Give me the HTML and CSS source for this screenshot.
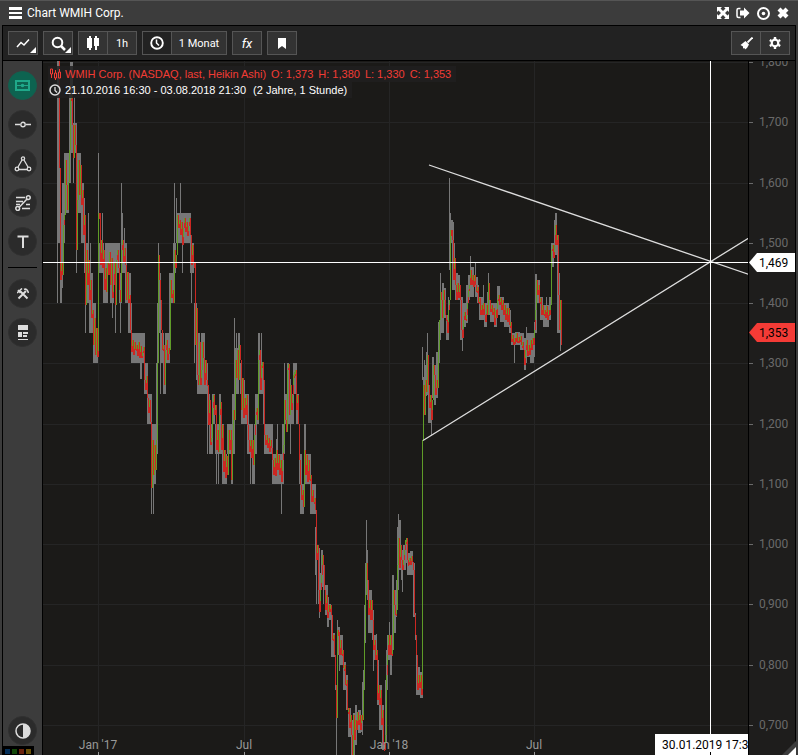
FILE: index.html
```html
<!DOCTYPE html>
<html lang="de">
<head>
    <meta charset="UTF-8">
    <meta name="viewport" content="width=device-width, initial-scale=1.0">
    <title>Chart WMIH Corp.</title>

    <link rel="stylesheet" href="styles.css">

</head>
<body>

    <div class="window">

        <header class="titlebar">
            <button class="plain" aria-label="Menü">
                <svg width="13" height="12" shape-rendering="crispEdges"><path d="M0 0H13V3H0zM0 5H13V7H0zM0 9H13V12H0z" fill="#fff"/></svg>
            </button>
            <h1>Chart WMIH Corp.</h1>

            <div class="win-buttons">
                <button class="plain" aria-label="Maximieren">
                    <svg width="12" height="12"><path d="M0 0H5L3.500 1.500L6 4L8.500 1.500L7 0H12V5L10.500 3.500L8 6L10.500 8.500L12 7V12H7L8.500 10.500L6 8L3.500 10.500L5 12H0V7L1.500 8.500L4 6L1.500 3.500L0 5z" fill="#fff"/></svg>
                </button>
                <button class="plain" aria-label="Abdocken">
                    <svg width="14" height="12"><path d="M4.500 1.500H2.500Q1 1.500 1 3V9Q1 10.500 2.500 10.500H4.500" fill="none" stroke="#fff" stroke-width="1.500"/><path d="M4 3.500H8V.5L13.500 6L8 11.500V8.500H4z" fill="#fff"/></svg>
                </button>
                <button class="plain" aria-label="Fixieren">
                    <svg width="13" height="13"><circle cx="6.500" cy="6.500" r="5.500" fill="none" stroke="#fff" stroke-width="2"/><circle cx="6.500" cy="6.500" r="1.800" fill="#fff"/></svg>
                </button>
                <button class="plain" aria-label="Schließen">
                    <svg width="12" height="12"><path d="M2 2L10 10M10 2L2 10" stroke="#fff" stroke-width="4.200"/></svg>
                </button>
            </div>
        </header>

        <div class="content">

            <div class="toolbar">
                <div class="group">
                    <button class="more" aria-label="Zeichnen">
                        <svg width="14" height="10"><path d="M1 9L5 4.500L8 7L13 1.500" fill="none" stroke="#fff" stroke-width="1.500"/></svg>
                    </button>
                </div>
                <div class="group">
                    <button class="more" aria-label="Zoom">
                        <svg width="15" height="15"><circle cx="6.500" cy="6.500" r="4.800" fill="none" stroke="#fff" stroke-width="2"/><path d="M10 10L14 14" stroke="#fff" stroke-width="2.500"/></svg>
                    </button>
                </div>
                <div class="group">
                    <button aria-label="Charttyp">
                        <svg width="12" height="16" shape-rendering="crispEdges"><path d="M0 3H5V13H0zM2 1H4V15H2zM7 3H12V11H7zM8 1H10V15H8z" fill="#fff"/></svg>
                    </button>
                    <button>1h</button>
                </div>
                <div class="group">
                    <button class="pressed" aria-label="Zeitraum">
                        <svg width="14" height="14"><circle cx="7" cy="7" r="5.800" fill="none" stroke="#fff" stroke-width="1.900"/><path d="M6.500 3.500V7L9 9.500" fill="none" stroke="#fff" stroke-width="1.500"/></svg>
                    </button>
                    <button class="period">1 Monat</button>
                </div>
                <div class="group">
                    <button class="fx">fx</button>
                </div>
                <div class="group">
                    <button aria-label="Lesezeichen">
                        <svg width="8" height="11"><path d="M0 0H8V11L4 8L0 11z" fill="#fff"/></svg>
                    </button>
                </div>

                <div class="group last">
                    <button aria-label="Löschen">
                        <svg width="13" height="13"><path d="M12.500 .5L7.500 5.500" stroke="#fff" stroke-width="1.800"/><path d="M5.500 4L9 7.500L7 11L5 12.500L4.500 11L3 11.500L3 9.500L.5 8z" fill="#fff"/></svg>
                    </button>
                    <button aria-label="Einstellungen">
                        <svg width="12" height="12"><circle cx="6" cy="6" r="3.300" fill="none" stroke="#fff" stroke-width="2.200"/><path d="M6 0V2M6 10V12M.8 3L2.500 4M9.500 8L11.200 9M.8 9L2.500 8M9.500 4L11.200 3" stroke="#fff" stroke-width="2.400"/></svg>
                    </button>
                </div>
            </div>

            <div class="main">

                <nav class="sidebar">
                    <button class="active" aria-label="Handel">
                        <svg width="15" height="11"><path d="M1 1H14V10H1z" fill="none" stroke="#1fa98a" stroke-width="2"/><path d="M1 5.500H14" stroke="#1fa98a"/><circle cx="7.500" cy="5.500" r="1.800" fill="#1fa98a"/></svg>
                    </button>
                    <button aria-label="Linie">
                        <svg width="16" height="7"><path d="M0 3.500H5M11 3.500H16" stroke="#ddd" stroke-width="1.500"/><circle cx="8" cy="3.500" r="2.200" fill="none" stroke="#ddd" stroke-width="1.400"/></svg>
                    </button>
                    <button aria-label="Formen">
                        <svg width="18" height="16" fill="none" stroke="#ddd" stroke-width="1.300"><path d="M8 4L4 11M10 4L14 11M5 13.500H13"/><circle cx="9" cy="2.500" r="1.600"/><circle cx="3" cy="13" r="1.800"/><circle cx="15" cy="13" r="1.800"/></svg>
                    </button>
                    <button aria-label="Fibonacci">
                        <svg width="16" height="16" fill="none" stroke="#ddd" stroke-width="1.500"><path d="M1 2.500H10M1 6.500H8M11 9.500H15M1 9.500H5M7 13.500H15M4 12.500L12 4"/><circle cx="13.300" cy="2.700" r="1.900"/><circle cx="2.700" cy="13.500" r="1.900"/></svg>
                    </button>
                    <button aria-label="Text">
                        <svg width="12" height="13"><path d="M.5 1.500H11.500M6 1V13" stroke="#ddd" stroke-width="2"/></svg>
                    </button>
                    <hr>
                    <button aria-label="Werkzeuge">
                        <svg width="12" height="12"><path d="M1.500 10.500L9 3M10.500 10.500L3 3" stroke="#ddd" stroke-width="2"/><path d="M0 5L5 .5M7 1.500Q10 0 11.500 5M1 2L3.500 5" fill="none" stroke="#ddd" stroke-width="1.600"/></svg>
                    </button>
                    <button aria-label="Vorlagen">
                        <svg width="10" height="15" shape-rendering="crispEdges"><path d="M0 0H10V5H0zM0 7H4V12H0zM5 7H10V9H5zM5 10H9V12H5zM0 14H10V15H0z" fill="#ddd"/></svg>
                    </button>
                    <button class="contrast" aria-label="Kontrast">
                        <svg width="16" height="16"><circle cx="8" cy="8" r="7" fill="none" stroke="#ddd" stroke-width="1.500"/><path d="M8 1A7 7 0 0 1 8 15z" fill="#ddd"/></svg>
                    </button>
                    <div class="leds"><i class="blue"></i><i class="green"></i><i class="red"></i><i class="yellow"></i></div>
                </nav>

                <div class="plot">
                    <svg class="canvas" role="img" aria-label="Kursverlauf WMIH Corp.">
                        <g transform="translate(-43 -61)">
                            <g id="grid"></g>
                            <g id="ranges" fill="#777"></g>
                            <g id="bodies"></g>
                            <g class="trend">
                                <path d="M429 165L768 281M423 440.500L768 226"/>
                            </g>
                            <g class="time">
                                <text x="98" y="749">Jan '17</text>
                                <text x="244" y="749">Jul</text>
                                <text x="389" y="749">Jan '18</text>
                                <text x="534" y="749">Jul</text>
                            </g>
                            <path class="cross" d="M43 262.500H2000M710.500 61V2000"/>
                            <rect x="655" y="734" width="110" height="30" fill="#fff"/>
                            <path d="M710.500 752V760" stroke="#000"/>
                            <text class="date" x="662" y="749">30.01.2019 17:30</text>
                        </g>
                    </svg>

                    <div class="legend">
                        <p class="quote">
                            <svg width="12" height="12" fill="none" stroke="#f23c35"><path d="M1.500 1H3.500V6H1.500zM2.500 6V10M5.500 5H7.500V10H5.500zM6.500 2V5M6.500 10V12M9.500 4H11.500V10H9.500zM10.500 1V4"/></svg>
                            <span>WMIH Corp. (NASDAQ, last, Heikin Ashi)</span>
                            <span>O: 1,373</span><span>H: 1,380</span><span>L: 1,330</span><span>C: 1,353</span>
                        </p>
                        <p>
                            <svg width="12" height="12"><circle cx="6" cy="6" r="5" fill="none" stroke="#ddd" stroke-width="1.500"/><path d="M6 3V6.500L8 8.500" fill="none" stroke="#ddd" stroke-width="1.300"/></svg>
                            <span>21.10.2016 16:30 - 03.08.2018 21:30</span>
                            <span class="span">(2 Jahre, 1 Stunde)</span>
                        </p>
                    </div>
                </div>

                <svg class="axis" role="img" aria-label="Preisachse">
                    <g transform="translate(0 -61)">
                        <g id="prices"></g>
                        <path d="M0 262.500L8 253H47V272H8z" fill="#fff"/>
                        <text class="tag" x="10" y="267">1,469</text>
                        <path d="M0 332.500L8 323H47V342H8z" fill="#f43b36"/>
                        <text class="tag" x="10" y="337">1,353</text>
                    </g>
                </svg>

            </div>
        </div>

        <svg class="resize" width="16" height="16"><path d="M16 0V16H0z" fill="#3c3c3c"/><path d="M14 8V16H6z" fill="#fff"/></svg>

    </div>

    <script src="chart.js"></script>

</body>
</html>
```

FILE: styles.css
```css
*
{
    margin: 0;
    padding: 0;
    box-sizing: border-box;
}

body
{
    background: #3c3c3c;
    color: #fff;
    font-family: Roboto, "Liberation Sans", sans-serif;
    font-size: 12px;
}

button
{
    color: inherit;
    font: inherit;
    font-size: 11px;
    border: none;
    background: none;
    display: flex;
    align-items: center;
    justify-content: center;
}

.window
{
    display: flex;
    flex-direction: column;
    height: 100vh;
    overflow: hidden;
    position: relative;
    padding: 0 2px;
    border-top: 1px solid #555;
}

.titlebar
{
    display: flex;
    align-items: center;
    gap: 5px;
    height: 24px;
    padding: 0 7px;
}

.titlebar h1
{
    font-size: 12px;
    font-weight: normal;
}

.win-buttons
{
    display: flex;
    align-items: center;
    gap: 7px;
    margin-left: auto;
}

.content
{
    display: flex;
    flex-direction: column;
    flex: 1;
    min-height: 0;
    border: 1px solid #000;
    border-bottom: none;
}

/* toolbar */

.toolbar
{
    display: flex;
    align-items: center;
    gap: 5px;
    height: 35px;
    padding: 0 5px;
    background: #222;
    border-bottom: 1px solid #000;
}

.group
{
    display: flex;
    height: 24px;
    border: 1px solid #555;
    background: #333;
}

.group button
{
    width: 28px;
    position: relative;
}

.group button + button
{
    width: 29px;
    border-left: 1px solid #555;
}

.group .period
{
    width: 55px !important;
}

.group .pressed
{
    background: #222;
}

.group .fx
{
    font-size: 13px;
    font-style: italic;
}

.group .more::after
{
    content: '';
    position: absolute;
    right: 1px;
    bottom: 1px;
    border: 3px solid #fff;
    border-top-color: transparent;
    border-left-color: transparent;
}

.last
{
    margin-left: auto;
}

.main
{
    display: flex;
    flex: 1;
    min-height: 0;
}

/* drawing tools on the left */

.sidebar
{
    display: flex;
    flex-direction: column;
    align-items: center;
    gap: 10px;
    width: 40px;
    padding-top: 10px;
    background: #3c3c3c;
    border-right: 1px solid #000;
}

.sidebar button
{
    width: 29px;
    height: 29px;
    flex: none;
    border-radius: 50%;
    background: #2b2b2b;
    border: 1px solid #303030;
}

.sidebar .active
{
    background: #0d6350;
    border-color: #13604f;
}

.sidebar hr
{
    width: 29px;
    border: none;
    border-top: 1px solid #000;
    margin: 1px 0;
}

.sidebar .contrast
{
    margin-top: auto;
}

.leds
{
    display: flex;
    align-self: flex-start;
    gap: 2px;
    width: 31px;
    height: 9px;
    margin-top: -9px;
    padding: 3px 2px;
    background: #000;
}

.leds i
{
    width: 5px;
    height: 5px;
}

.blue { background: #05305a; }
.green { background: #124708; }
.red { background: #6b220c; }
.yellow { background: #6b5209; }

/* chart */

.plot
{
    flex: 1;
    min-width: 0;
    position: relative;
    background: #1b1a18;
}

.canvas
{
    display: block;
    width: 100%;
    height: 100%;
}

.axis
{
    width: 47px;
    height: 100%;
    background: #1e1d1c;
    border-left: 1px solid #000;
    overflow: hidden;
}

#grid
{
    stroke: #252525;
}

.trend
{
    fill: none;
    stroke: #ddd;
    stroke-width: 1.3;
}

.cross
{
    stroke: #fff;
}

.time
{
    fill: #999;
    text-anchor: middle;
}

#prices text
{
    fill: #6a6a6a;
}

.legend
{
    position: absolute;
    left: 5px;
    top: 5px;
    font-family: "Liberation Sans", sans-serif;
    font-size: 11px;
}

.legend p
{
    display: flex;
    align-items: center;
    gap: 5px;
    width: max-content;
    height: 16px;
    padding-left: 1px;
    padding-right: 5px;
    background: rgba(32, 32, 32, 0.85);
}

.legend svg + span
{
    margin-left: -1px;
}

.legend .quote
{
    color: #f23c35;
}

.legend .span
{
    margin-left: 2px;
}

.resize
{
    position: absolute;
    right: 0;
    bottom: 0;
}
```

FILE: chart.js
```js
var NS = 'http://www.w3.org/2000/svg';

// high/low ranges: x width top bottom
var ranges = `
57 1 60 303,58 2 60 243,60 3 213 288,60 2 213 303,62 3 183 243,64 4 153 213,68 1 177 213,68 2 153 183,69 2 93 183,
70 3 62 153,72 4 123 153,73 1 123 183,74 1 97 123,76 1 123 273,77 4 153 213,81 3 183 243,84 1 198 273,85 3 243 273,
85 1 243 333,86 3 243 303,88 1 213 303,89 3 273 303,90 1 243 273,89 4 273 333,92 4 303 333,93 5 333 363,98 1 153 213,
99 5 243 273,102 1 213 243,103 5 273 303,105 7 243 273,110 4 273 303,113 2 243 273,112 1 243 318,115 1 243 333,
116 4 243 273,119 3 273 303,120 1 273 333,121 1 183 273,122 1 213 243,124 1 228 243,122 5 243 273,125 4 273 303,
129 2 273 333,128 4 303 333,131 14 333 363,140 2 363 379,144 4 363 394,147 5 394 424,151 5 424 484,151 1 484 514,
153 1 484 514,156 2 363 454,157 1 303 394,158 1 243 303,158 3 273 333,160 4 333 363,160 1 333 394,163 3 363 394,
162 2 333 363,165 5 333 363,169 6 273 303,169 1 303 333,173 3 243 273,174 1 183 243,176 1 198 213,176 15 213 243,
180 1 183 213,182 1 243 273,190 4 243 273,191 1 273 303,194 3 303 333,194 1 333 363,196 1 333 380,198 2 333 363,
197 5 363 394,201 4 333 363,202 6 363 394,207 3 394 424,207 1 424 454,209 4 424 454,212 3 394 424,215 7 424 454,
216 1 454 484,218 1 454 484,219 2 394 424,222 2 424 454,222 5 454 484,227 5 424 454,231 2 454 484,232 3 394 454,
234 1 318 424,235 4 348 394,236 1 333 348,238 2 333 363,240 2 363 394,241 3 394 424,244 1 380 424,243 6 394 424,
247 6 424 454,250 1 454 484,252 3 454 484,254 3 424 454,255 4 394 424,258 2 333 394,261 1 333 363,259 4 363 394,
263 2 380 424,264 9 424 454,272 12 454 484,277 1 424 454,276 1 439 454,281 1 484 514,282 3 424 454,284 1 363 454,
284 4 394 424,287 2 363 424,290 1 379 454,289 5 394 424,293 4 363 394,296 3 394 424,299 3 454 484,300 4 484 514,
304 2 424 484,306 5 454 484,310 6 484 514,315 2 527 575,316 1 575 604,318 2 548 604,319 1 604 618,320 1 573 600,
321 2 550 587,323 1 556 604,325 3 585 615,327 2 597 627,329 2 604 620,331 1 610 657,332 3 633 657,335 1 655 690,
336 1 690 755,337 1 620 670,338 2 627 655,339 1 655 671,340 3 635 665,343 3 662 690,346 2 675 710,348 3 708 737,
351 2 720 755,353 2 713 755,355 2 705 745,358 3 710 733,360 2 715 732,362 1 682 735,363 1 670 690,364 1 605 690,
365 1 563 643,366 1 520 595,367 1 550 600,368 4 590 633,371 1 593 625,372 2 610 640,373 1 632 671,374 3 635 660,
376 1 634 660,377 2 660 705,379 3 685 730,382 2 705 750,385 2 680 743,386 2 650 690,387 3 635 660,389 1 622 655,
390 2 640 675,392 2 575 650,394 2 590 633,396 1 580 617,397 1 527 590,398 1 514 590,399 2 520 570,401 2 550 580,
402 1 580 592,403 3 545 570,406 1 538 563,407 3 553 575,410 3 551 575,413 2 563 617,415 1 613 640,416 1 645 695,
417 3 667 695,420 3 672 698,422 1 347 380,423 1 377 420,424 2 365 400,424 1 360 400,426 1 352 396,427 1 333 395,
428 2 385 423,430 2 397 423,431 1 395 436,432 2 357 398,434 2 365 405,436 2 352 398,438 2 322 363,440 1 273 340,
441 1 295 333,442 2 283 333,444 2 288 318,446 2 315 340,448 1 297 340,449 1 178 270,450 1 213 255,451 2 220 243,
452 2 222 290,454 1 243 290,455 3 273 300,458 2 275 300,460 3 297 340,462 1 340 351,463 3 303 327,466 2 285 323,
468 2 275 300,470 1 256 280,470 4 267 297,475 1 262 297,475 3 277 297,477 2 285 303,479 5 297 320,483 1 285 300,
484 3 303 327,488 1 273 310,487 3 292 315,490 4 303 322,494 3 303 327,497 3 286 315,500 4 297 322,504 5 303 327,
509 2 310 333,511 3 333 345,514 1 333 363,515 5 332 345,520 4 333 350,524 2 338 370,526 4 333 357,526 1 327 363,
530 4 333 363,534 1 322 357,535 2 274 333,537 3 280 303,540 3 297 320,543 6 305 327,546 1 297 310,549 2 297 320,
551 3 243 267,554 1 220 255,555 2 213 255,557 1 237 333,558 2 273 333,560 1 300 351,561 1 310 345`;

// heikin ashi course: x y
var course = `
58 60,59 168,60 280,61 262,62 275,63 225,64 215,65 160,66 185,67 210,68 182,69 150,70 100,71 95,72 125,73 158,74 125,
75 145,76 250,77 200,78 160,79 195,80 165,81 205,82 190,83 235,84 215,85 305,86 250,87 285,88 260,89 300,90 280,
91 318,92 310,93 345,94 318,95 355,96 328,97 357,98 345,98 213,99 213,100 265,101 240,102 268,103 250,104 290,105 268,
106 292,107 262,108 275,109 252,110 285,111 258,112 298,113 285,114 262,115 305,116 260,117 250,118 268,119 290,120 302,
121 250,122 240,123 263,124 248,125 265,126 300,127 272,128 303,129 295,130 330,131 352,132 340,133 355,134 342,
135 350,136 345,137 356,138 342,139 358,140 346,141 358,142 352,143 347,144 380,145 390,146 376,147 398,148 413,
149 400,150 422,151 488,152 440,153 475,154 445,155 470,156 440,157 363,158 255,159 280,160 300,161 330,162 350,
163 345,164 385,165 350,166 340,167 360,168 348,169 350,170 280,171 298,172 290,173 303,174 250,175 268,176 255,
177 215,178 228,179 220,180 235,181 222,182 245,183 228,184 218,185 232,186 222,187 236,188 226,189 218,190 235,
191 265,192 245,193 262,194 262,195 345,196 308,197 375,198 385,199 342,200 385,201 370,202 342,203 358,204 385,
205 360,206 380,207 385,208 425,209 400,210 445,211 438,212 408,213 395,214 415,215 405,216 450,217 430,218 452,
219 415,220 402,221 450,222 425,223 472,224 450,225 478,226 456,227 475,228 430,229 450,230 430,231 480,232 440,
233 410,234 420,235 360,236 378,237 350,238 380,239 345,240 360,241 410,242 378,243 418,244 398,245 415,246 395,
247 425,248 440,249 452,250 440,251 458,252 440,253 465,254 435,255 415,256 408,257 420,258 360,259 350,260 390,
261 365,262 362,263 380,264 435,265 445,266 435,267 448,268 438,269 452,270 440,271 448,272 460,273 475,274 458,
275 476,276 450,277 470,278 455,279 475,280 460,281 482,282 460,283 445,284 400,285 420,286 432,287 370,288 364,
289 415,290 385,291 410,292 395,293 375,294 372,295 370,296 410,297 395,298 424,299 460,300 485,301 500,302 490,
303 507,304 450,305 475,306 455,307 482,308 460,309 480,310 475,311 502,312 490,313 502,314 498,315 510,316 560,
317 545,318 590,319 612,320 590,321 575,322 555,323 565,324 590,325 610,326 595,327 618,328 605,329 612,330 605,
331 615,332 640,333 635,334 655,335 685,336 718,337 670,337 630,338 632,339 655,340 640,341 655,342 650,343 668,
344 665,345 685,346 680,347 710,348 708,349 728,350 715,351 735,352 755,353 715,354 740,355 720,356 730,357 712,
358 725,359 715,360 730,361 715,362 720,363 690,364 640,365 595,366 563,367 580,368 615,369 600,370 620,371 600,
372 620,373 650,374 640,375 660,376 650,377 700,378 685,379 705,380 690,381 725,382 710,383 745,384 750,385 735,
386 675,387 655,388 635,389 655,390 635,391 655,392 650,393 590,394 605,395 615,396 610,397 565,398 538,399 568,
400 545,401 560,402 570,403 560,404 550,405 540,406 538,407 560,408 565,409 558,410 565,411 556,412 562,413 570,
414 615,415 635,416 655,417 690,418 675,419 688,420 675,421 695,422 683,422 440,423 385,424 415,425 380,426 392,
427 355,428 385,429 408,430 395,431 420,432 400,433 365,434 375,435 395,436 380,437 388,438 350,439 320,440 292,
441 300,442 318,443 290,444 300,445 315,446 320,447 333,448 310,449 300,450 230,451 230,452 240,453 280,454 258,
455 285,456 300,457 283,458 298,459 285,460 300,461 330,462 338,463 320,464 312,465 320,466 315,467 303,468 290,
469 285,470 270,471 285,472 275,473 287,474 275,475 285,476 292,477 287,478 303,479 298,480 315,481 305,482 315,
483 303,484 315,485 322,486 305,487 315,488 283,489 300,490 312,491 305,492 315,493 308,494 325,495 310,496 318,
497 300,498 295,499 305,500 298,501 310,502 300,503 315,504 305,505 320,506 308,507 322,508 308,509 325,510 322,
511 342,512 335,513 345,514 338,515 342,516 333,517 343,518 337,519 342,520 336,521 345,522 342,523 350,524 365,
525 350,526 340,527 356,528 345,529 355,530 340,531 350,532 338,533 345,534 330,535 310,536 280,537 295,538 285,
539 303,540 298,541 315,542 305,543 315,544 310,545 318,546 306,547 320,548 310,549 315,550 305,551 250,552 245,
553 258,554 245,555 225,556 245,557 235,558 295,559 330,560 300,561 345`;

var RED = '#cc2722';
var GREEN = '#5f9c28';

var grid = document.getElementById('grid');
var prices = document.getElementById('prices');
var bodies = document.getElementById('bodies');

function make(parent, name, attrs, text)
{
    var el = document.createElementNS(NS, name);
    for (var key in attrs)
    {
        el.setAttribute(key, attrs[key]);
    }
    if (text) el.textContent = text;
    parent.appendChild(el);
}

function rows(data)
{
    return data.trim().split(',').map(row => row.trim().split(' ').map(Number));
}

function body(x, y, height, fill)
{
    make(bodies, 'rect', { x: x, y: y, width: 1, height: height, fill: fill });
}

function drawBody(x, from, to)
{
    var y = Math.min(from, to);
    var height = Math.max(Math.abs(to - from), 6);

    // only a real rise is a green body, a small one just gets a green tip
    if (from - to > 26)
    {
        body(x, y, height, GREEN);
        return;
    }

    body(x, y, height, RED);
    if (to < from) body(x, y, Math.max(4, Math.round(height / 2)), GREEN);
}

for (var i = 0; i < 12; i++)
{
    var lineY = Math.round(62 + i * 60.25) + 0.5;
    var label = ((18 - i) / 10).toFixed(3).replace('.', ',');
    make(grid, 'path', { d: 'M43 ' + lineY + 'H2000' });
    make(prices, 'path', { d: 'M0 ' + lineY + 'H4', stroke: '#6a6a6a' });
    make(prices, 'text', { x: 10, y: Math.floor(lineY + 4) }, label);
}

[98, 244, 389, 534].forEach(x => {
    make(grid, 'path', { d: 'M' + (x + 0.5) + ' 61V2000' });
    make(grid, 'path', { d: 'M' + (x + 0.5) + ' 752V755', stroke: '#999' });
});

rows(ranges).forEach(r => {
    make(document.getElementById('ranges'), 'rect', { x: r[0], y: r[2], width: r[1], height: r[3] - r[2] });
});

var points = rows(course);

for (var n = 1; n < points.length; n++)
{
    drawBody(points[n][0], points[n - 1][1], points[n][1]);
}
```
